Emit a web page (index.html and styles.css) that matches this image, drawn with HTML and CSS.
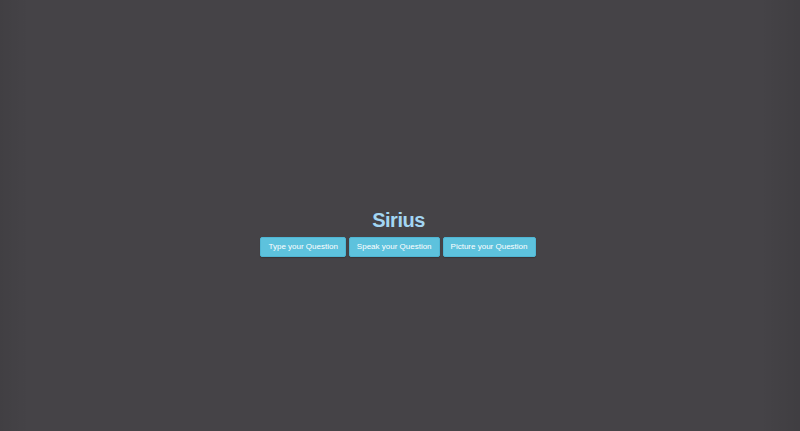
FILE: index.html
```html
<!DOCTYPE html>
<html lang="en">
<head>
<meta charset="utf-8">
<title>Sirius</title>
<link rel="stylesheet" href="styles.css">
</head>
<body>
<main class="page">
  <h1 class="title">Sirius</h1>
  <div class="actions">
    <button class="btn" type="button">Type your Question</button>
    <button class="btn" type="button">Speak your Question</button>
    <button class="btn" type="button">Picture your Question</button>
  </div>
</main>
</body>
</html>
```

FILE: styles.css
```css
html, body {
  margin: 0;
  padding: 0;
  height: 100%;
}

body {
  background: #454347;
  background-image: linear-gradient(to right, rgba(0,0,0,0.06) 0, rgba(0,0,0,0) 30px, rgba(0,0,0,0) calc(100% - 40px), rgba(0,0,0,0.08) 100%);
  font-family: "Liberation Sans", Arial, Helvetica, sans-serif;
  overflow: hidden;
}

.page {
  display: flex;
  flex-direction: column;
  align-items: center;
  padding-top: 208px;
}

.title {
  margin: 0 0 5px -3px;
  font-size: 20px;
  line-height: 24px;
  font-weight: bold;
  letter-spacing: -0.5px;
  color: #a3d6f3;
}

.actions {
  display: flex;
  gap: 3px;
  margin-left: -4px;
}

.btn {
  height: 20px;
  margin: 0;
  padding: 0 7px;
  font-family: "Liberation Sans", Arial, Helvetica, sans-serif;
  font-size: 8px;
  line-height: 18px;
  color: #ffffff;
  background: #5dc2dd;
  border: 1px solid #4fb6d4;
  border-radius: 2px;
  box-shadow: 0 1px 1px rgba(0,0,0,0.2);
  cursor: pointer;
}
```
